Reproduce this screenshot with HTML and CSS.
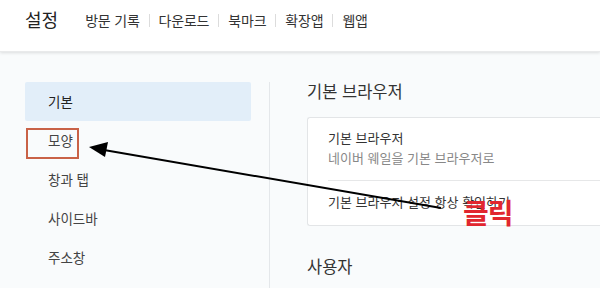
FILE: index.html
```html
<!DOCTYPE html>
<html lang="ko">
<head>
<meta charset="utf-8">
<link rel="stylesheet" href="styles.css">
</head>
<body>
<header class="topbar">
  <h1 class="title">설정</h1>
  <nav class="nav">
    <span class="nav-item">방문 기록</span><span class="sep"></span>
    <span class="nav-item">다운로드</span><span class="sep"></span>
    <span class="nav-item">북마크</span><span class="sep"></span>
    <span class="nav-item">확장앱</span><span class="sep"></span>
    <span class="nav-item">웹앱</span>
  </nav>
</header>
<main class="main">
  <aside class="sidebar">
    <div class="side-item active">기본</div>
    <div class="side-item">모양</div>
    <div class="side-item">창과 탭</div>
    <div class="side-item">사이드바</div>
    <div class="side-item">주소창</div>
  </aside>
  <section class="content">
    <h2 class="section-title">기본 브라우저</h2>
    <div class="card">
      <div class="row">
        <div class="row-title">기본 브라우저</div>
        <div class="row-sub">네이버 웨일을 기본 브라우저로</div>
      </div>
      <div class="row row-line">
        <div class="row-title">기본 브라우저 설정 항상 확인하기</div>
      </div>
    </div>
    <h2 class="section-title second">사용자</h2>
  </section>
</main>
<div class="mark-box"></div>
<svg class="arrow" width="600" height="288" viewBox="0 0 600 288">
  <line x1="441" y1="208" x2="104" y2="150" stroke="#000" stroke-width="2"/>
  <polygon points="89,147 108,142 105,157" fill="#000"/>
</svg>
<div class="click-label">클릭</div>
</body>
</html>
```
FILE: styles.css
```css
* { box-sizing: border-box; margin: 0; padding: 0; }
html, body { width: 600px; height: 288px; overflow: hidden; }
body {
  background: #f9fbfc;
  font-family: "Noto Sans CJK KR", "Noto Sans", sans-serif;
  color: #333;
  position: relative;
}
.topbar {
  height: 52px;
  background: #fff;
  display: flex;
  align-items: flex-start;
  padding: 6px 0 0 25px;
  box-shadow: 0 1px 3px rgba(0,0,0,0.12);
  border-bottom: 1px solid #e9eaeb;
}
.title {
  font-size: 18px;
  font-weight: 400;
  line-height: 26px;
  color: #222;
  margin-right: 27px;
  flex-shrink: 0;
}
.nav {
  display: flex;
  align-items: center;
  height: 26px;
  margin-top: 1px;
}
.nav-item {
  font-size: 14px;
  color: #333;
  letter-spacing: -0.2px;
  white-space: nowrap;
}
.sep {
  width: 1px;
  height: 13px;
  background: #dcdcdc;
  margin: 0 9px;
}
.main {
  display: flex;
  padding-top: 30px;
}
.sidebar {
  width: 226px;
  flex-shrink: 0;
  margin-left: 25px;
  margin-right: 18px;
  display: flex;
  flex-direction: column;
}
.side-item {
  height: 39px;
  line-height: 39px;
  padding-left: 23px;
  font-size: 13.5px;
  color: #444;
  border-radius: 2px;
}
.side-item.active {
  background: #e2eef9;
  color: #222;
}
.content {
  border-left: 1px solid #e4e7ea;
  padding-left: 37px;
  flex: 1;
  min-width: 0;
  height: 260px;
}
.section-title {
  font-size: 16.5px;
  font-weight: 400;
  color: #333;
  line-height: 20px;
  margin-top: -1px;
  height: 36px;
  white-space: nowrap;
}
.section-title.second {
  margin-top: 30px;
}
.card {
  background: #fff;
  border: 1px solid #e3e5e7;
  border-right: none;
  border-radius: 3px 0 0 3px;
  width: 310px;
  padding-left: 20px;
  white-space: nowrap;
}
.row {
  padding: 10px 0 12px;
}
.row-line {
  border-top: 1px solid #e6e7e8;
  padding: 11px 0 13px;
}
.row-title {
  font-size: 13px;
  color: #333;
  line-height: 20px;
}
.row-sub {
  font-size: 13px;
  color: #888;
  line-height: 20px;
}
.mark-box {
  position: absolute;
  left: 26px;
  top: 128px;
  width: 53px;
  height: 31px;
  border: 2px solid #c96247;
}
.arrow {
  position: absolute;
  left: 0;
  top: 0;
}
.click-label {
  position: absolute;
  left: 463px;
  top: 194px;
  font-size: 28px;
  font-weight: 700;
  color: #e1262f;
  line-height: 36px;
  letter-spacing: -1px;
}
```
